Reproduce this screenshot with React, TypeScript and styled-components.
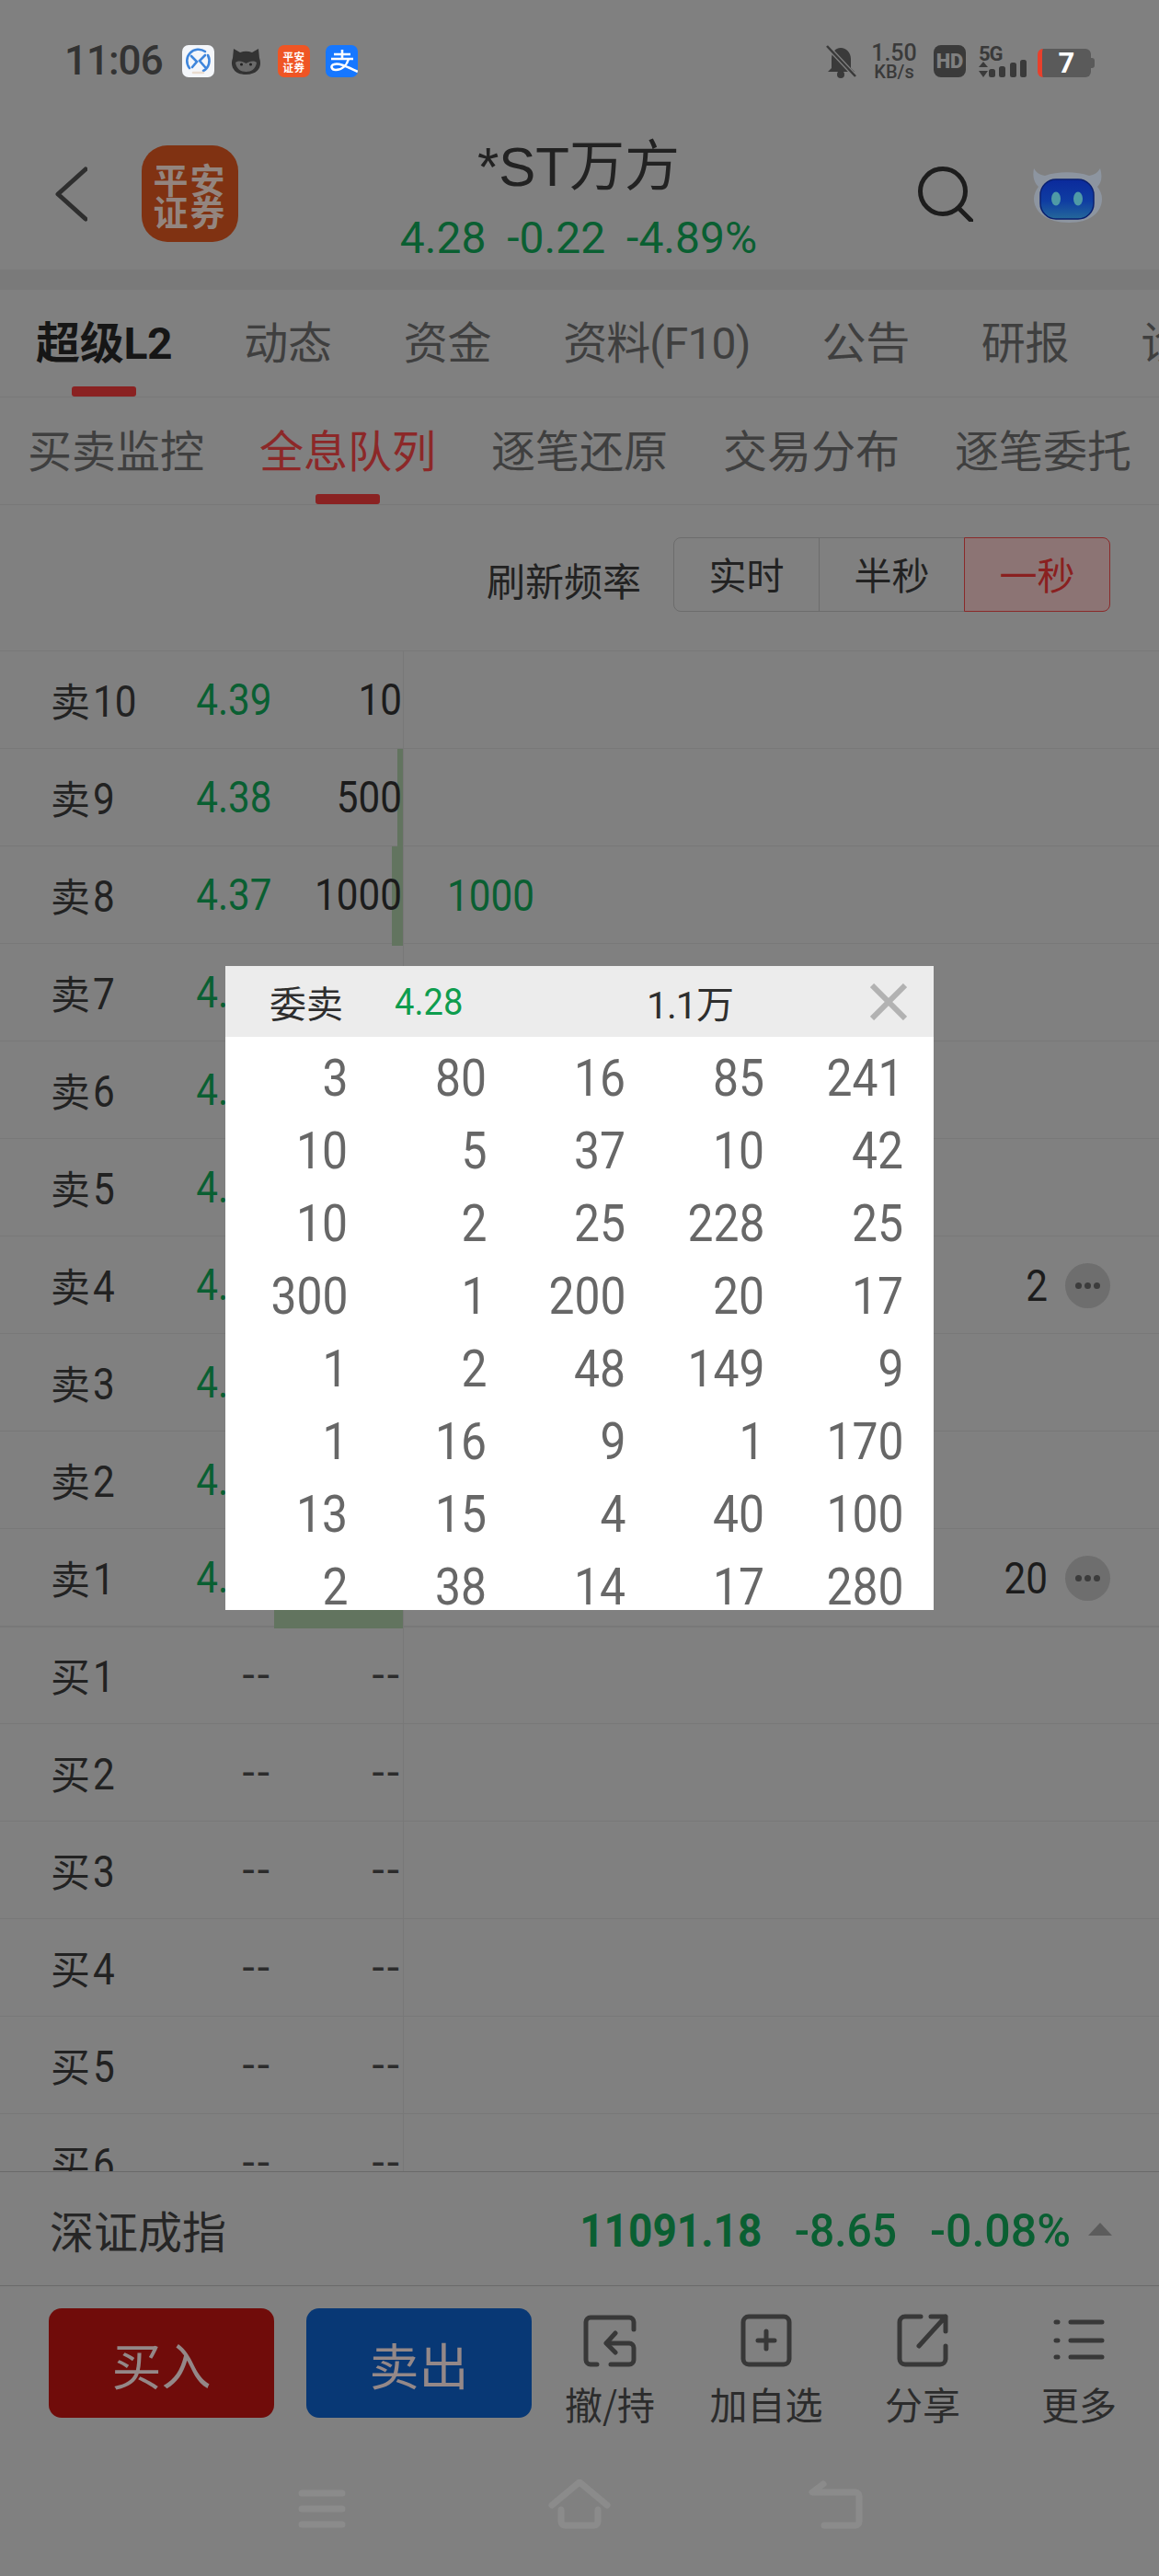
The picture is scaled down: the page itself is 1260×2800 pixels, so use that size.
import { createGlobalStyle, styled } from "styled-components";

const CN = `"Noto Sans CJK SC", sans-serif`;
const NUM = `Roboto, "Noto Sans CJK SC", sans-serif`;
const GREEN = "#0a5f32";
const LINE = "#787878";

const GlobalStyle = createGlobalStyle`
  html, body { margin: 0; padding: 0; background: #808080; }
  * { box-sizing: border-box; }
`;

const Screen = styled.div`
  position: relative;
  width: 1260px;
  height: 2800px;
  overflow: hidden;
  background: #808080;
  font-family: ${NUM};
  color: #1c1c1c;
`;

/* the app uses a condensed DIN-style face for figures, so Roboto gets squeezed */
const Narrow = styled.span<{ $sx?: number; $from?: string }>`
  display: inline-block;
  white-space: nowrap;
  transform: scaleX(${(p) => p.$sx ?? 0.88});
  transform-origin: ${(p) => p.$from ?? "right"} center;
`;

/* status bar */
const StatusBar = styled.div`
  height: 100px;
  padding: 49px 70px 0 70px;
  display: flex;
  justify-content: space-between;
  align-items: flex-start;
`;
const StatusGroup = styled.div`
  height: 35px;
  display: flex;
  align-items: center;
`;
const Clock = styled.span`
  width: 128px;
  font: 500 44px/35px Roboto, sans-serif;
  letter-spacing: -1px;
  color: #333;
`;
const AppIcons = styled.div`
  display: flex;
  gap: 17px;
`;
const AppIcon = styled.div<{ $bg: string }>`
  width: 35px;
  height: 35px;
  border-radius: 7px;
  background: ${(p) => p.$bg};
  display: flex;
  align-items: center;
  justify-content: center;
  overflow: hidden;
`;
const TinyLogoText = styled.span`
  font: 700 11.5px/12px ${CN};
  letter-spacing: 0.5px;
  color: #fff;
  text-align: center;
  width: 26px;
`;
const Speed = styled.div`
  width: 52px;
  margin: 0 17px 0 15px;
  display: flex;
  flex-direction: column;
  align-items: center;
  font-family: Roboto, sans-serif;
  font-weight: 500;
  color: #3a3a3a;
`;
const SpeedValue = styled.span`
  font-size: 25px;
  line-height: 22px;
`;
const SpeedUnit = styled.span`
  font-size: 20px;
  line-height: 18px;
`;
const HdBadge = styled.span`
  width: 35px;
  height: 35px;
  border-radius: 8px;
  background: #3a3a3a;
  color: #808080;
  font: 900 22px/35px Roboto, sans-serif;
  text-align: center;
  margin-right: 14px;
`;
const Network = styled.div`
  position: relative;
  width: 52px;
  height: 35px;
  margin-right: 12px;
`;
const NetworkLabel = styled.span`
  position: absolute;
  left: 0;
  top: 0;
  font: 700 22px/19px Roboto, sans-serif;
  letter-spacing: -1px;
  color: #3a3a3a;
`;
const Battery = styled.div`
  position: relative;
  width: 58px;
  height: 31px;
  margin-top: 4px;
  margin-right: 4px;
  border-radius: 6px;
  border-left: 5px solid #e8402c;
  background: #5a5a5a;
  color: #fff;
  font: 700 31px/31px Roboto, sans-serif;
  text-align: center;
  &::after {
    content: "";
    position: absolute;
    right: -4px;
    top: 10px;
    width: 4px;
    height: 11px;
    border-radius: 0 3px 3px 0;
    background: #5a5a5a;
  }
`;

/* stock header */
const Header = styled.header`
  height: 193px;
  padding: 28px 62px 0 60px;
  display: grid;
  grid-template-columns: 1fr auto 1fr;
  align-items: center;
`;
const HeaderLeft = styled.div`
  display: flex;
  align-items: center;
  gap: 59px;
`;
const BrokerLogo = styled.div`
  width: 105px;
  height: 105px;
  border-radius: 28px;
  background: #803212;
  color: #93857f;
  font: 700 38px/35px ${CN};
  letter-spacing: 2px;
  text-align: center;
  padding-top: 18px;
`;
const HeaderCenter = styled.div`
  display: flex;
  flex-direction: column;
  align-items: center;
  padding-top: 8px;
`;
const StockName = styled.div`
  font: 400 60px/72px "Liberation Sans", "Noto Sans CJK SC", sans-serif;
  color: #222;
`;
const StockQuote = styled.div`
  margin-top: 16px;
  font-size: 48px;
  line-height: 50px;
  word-spacing: 11px;
  color: ${GREEN};
  white-space: nowrap;
`;
const HeaderRight = styled.div`
  display: flex;
  justify-content: flex-end;
  align-items: center;
  gap: 64px;
`;

const Band = styled.div`
  height: 22px;
  background: #7a7a7a;
`;

/* tabs */
const TabRow = styled.nav<{ $left: number; $gap: number }>`
  height: 117px;
  padding-left: ${(p) => p.$left}px;
  display: flex;
  gap: ${(p) => p.$gap}px;
  align-items: center;
  border-bottom: 1px solid ${LINE};
  overflow: hidden;
  white-space: nowrap;
  flex-shrink: 0;
`;
const MainTab = styled.span<{ $active?: boolean; $tight?: boolean }>`
  position: relative;
  height: 116px;
  line-height: 118px;
  font-size: 48px;
  letter-spacing: ${(p) => (p.$tight ? -0.9 : -0.3)}px;
  font-weight: ${(p) => (p.$active ? 700 : 400)};
  color: ${(p) => (p.$active ? "#161616" : "#3f3f3f")};
  flex-shrink: 0;
  ${(p) =>
    p.$active &&
    `&::after {
      content: "";
      position: absolute;
      left: 50%;
      bottom: 0;
      width: 70px;
      height: 11px;
      margin-left: -35px;
      border-radius: 3px;
      background: #8a2222;
    }`}
`;
const SubTab = styled(MainTab)`
  font-weight: 400;
  letter-spacing: 0;
  line-height: 120px;
  color: ${(p) => (p.$active ? "#8c2828" : "#3f3f3f")};
`;

/* refresh rate */
const RefreshRow = styled.div`
  height: 159px;
  padding: 35px 53px 0 0;
  display: flex;
  justify-content: flex-end;
  gap: 36px;
  border-bottom: 1px solid ${LINE};
`;
const RefreshLabel = styled.span`
  font: 400 42px/92px ${CN};
  color: #222;
`;
const Segments = styled.div`
  display: flex;
  height: 81px;
`;
const Segment = styled.span<{ $active?: boolean }>`
  width: 159px;
  height: 81px;
  margin-left: -1px;
  border: 1px solid ${(p) => (p.$active ? "#8a2a2a" : "#6c6c6c")};
  background: ${(p) => (p.$active ? "#8c7474" : "transparent")};
  color: ${(p) => (p.$active ? "#8a2020" : "#222")};
  font: 400 41px/76px ${CN};
  text-align: center;
  &:first-child {
    border-radius: 8px 0 0 8px;
  }
  &:last-child {
    border-radius: 0 8px 8px 0;
  }
`;

/* order book */
const Book = styled.div`
  height: 1652px;
  overflow: hidden;
  flex-shrink: 0;
`;
const BookRow = styled.div<{ $thick?: boolean }>`
  height: 106px;
  display: grid;
  grid-template-columns: 158px 138px 142px 1fr;
  border-bottom: 1px solid ${LINE};
  font-size: 48px;
  line-height: 105px;
  ${(p) => p.$thick && `box-shadow: 0 1px 0 ${LINE};`}
`;
const BookLabel = styled.div`
  padding-left: 55px;
  display: flex;
  align-items: baseline;
  color: #222;
`;
const LabelWord = styled.span`
  font: 400 43px/105px ${CN};
  margin-right: 3px;
`;
const BookPrice = styled.div<{ $empty?: boolean }>`
  text-align: right;
  color: ${(p) => (p.$empty ? "#2c2c2c" : GREEN)};
  ${(p) => p.$empty && "letter-spacing: 3px;"}
`;
const BookQty = styled.div<{ $empty?: boolean }>`
  position: relative;
  padding-right: 1px;
  text-align: right;
  color: ${(p) => (p.$empty ? "#2c2c2c" : "inherit")};
  ${(p) => p.$empty && "letter-spacing: 3px;"}
`;
const QtyBar = styled.i`
  position: absolute;
  right: 0;
  top: 0;
  bottom: -1px;
  background: #62745f;
`;
const BookOrders = styled.div`
  border-left: 1px solid ${LINE};
  padding: 0 53px 0 47px;
  display: flex;
  justify-content: space-between;
  align-items: center;
`;
const OrderGreen = styled.span`
  color: ${GREEN};
`;
const OrderEnd = styled.div`
  margin-left: auto;
  display: flex;
  align-items: center;
  gap: 19px;
`;
const MoreButton = styled.span`
  width: 49px;
  height: 49px;
  border-radius: 50%;
  background: #6e6e6e;
  display: flex;
  align-items: center;
  justify-content: center;
  gap: 3px;
`;
const MoreDot = styled.i`
  width: 7px;
  height: 7px;
  border-radius: 50%;
  background: #3c3c3c;
`;

/* index ticker */
const IndexRow = styled.div`
  height: 125px;
  padding: 0 51px 0 54px;
  display: flex;
  align-items: center;
  border-top: 1px solid #6a6a6a;
  border-bottom: 1px solid #6a6a6a;
  flex-shrink: 0;
`;
const IndexName = styled.span`
  font: 400 48px/1 ${CN};
  color: #262626;
  margin-right: auto;
`;
const IndexValue = styled.span<{ $w: number; $bold?: boolean }>`
  width: ${(p) => p.$w}px;
  display: flex;
  justify-content: flex-end;
  padding-top: 4px;
  font-size: 50px;
  font-weight: ${(p) => (p.$bold ? 700 : 500)};
  color: ${GREEN};
  margin-right: 40px;
  white-space: nowrap;
  &:nth-of-type(4) {
    margin-right: 19px;
  }
`;
const IndexArrow = styled.i`
  width: 0;
  height: 0;
  border-left: 13px solid transparent;
  border-right: 13px solid transparent;
  border-bottom: 14px solid #5c5c5c;
`;

/* bottom actions */
const ActionBar = styled.div`
  height: 166px;
  padding: 24px 0 0 53px;
  display: flex;
`;
const TradeButton = styled.button<{ $bg: string }>`
  width: 245px;
  height: 119px;
  margin-right: 35px;
  border: 0;
  border-radius: 14px;
  background: ${(p) => p.$bg};
  color: #948888;
  font: 400 54px/119px ${CN};
  &:nth-of-type(2) {
    margin-right: 0;
  }
`;
const Action = styled.div`
  width: 170px;
  display: flex;
  flex-direction: column;
  align-items: center;
`;
const ActionIcon = styled.svg`
  width: 58px;
  height: 58px;
  margin-top: 6px;
  flex-shrink: 0;
  fill: none;
  stroke: #383838;
  stroke-width: 5;
  stroke-linecap: round;
  stroke-linejoin: round;
`;
const ActionLabel = styled.span`
  font: 400 41px/48px ${CN};
  color: #2c2c2c;
  margin-top: 15px;
  white-space: nowrap;
`;

/* system nav */
const NavBar = styled.div`
  height: 149px;
  padding-top: 44px;
  display: flex;
  justify-content: center;
  gap: 212px;
`;
const NavIcon = styled.svg`
  width: 68px;
  height: 56px;
  fill: none;
  stroke: #8b8b8b;
  stroke-width: 7;
  stroke-linecap: round;
  stroke-linejoin: round;
`;

/* queue popup */
const Popup = styled.div`
  position: absolute;
  left: 245px;
  top: 1050px;
  width: 770px;
  height: 700px;
  background: #fff;
  overflow: hidden;
`;
const PopupHeader = styled.div`
  height: 77px;
  padding: 0 29px 0 48px;
  background: #ececec;
  display: flex;
  align-items: center;
  font-size: 41px;
`;
const PopupTitle = styled.span`
  width: 136px;
  font: 400 40px/1 ${CN};
  color: #2e2e2e;
`;
const PopupPrice = styled.span`
  width: 274px;
  color: #0e9d4e;
`;
const PopupTotal = styled.span`
  letter-spacing: -1px;
  color: #2e2e2e;
`;
const PopupClose = styled.svg`
  width: 40px;
  height: 40px;
  margin-left: auto;
  stroke: #b2b2b2;
  stroke-width: 6;
`;
const PopupGrid = styled.div`
  padding: 6px 33px 0 0;
  display: grid;
  grid-template-columns: 133px repeat(4, 151px);
  grid-auto-rows: 79px;
  font-size: 56px;
  line-height: 79px;
  color: #676767;
  text-align: right;
`;

type Level = { label: string; price: string; qty: string; bar?: number; green?: string; count?: string };

const sells: Level[] = [
  { label: "卖10", price: "4.39", qty: "10" },
  { label: "卖9", price: "4.38", qty: "500", bar: 6 },
  { label: "卖8", price: "4.37", qty: "1000", bar: 12, green: "1000" },
  { label: "卖7", price: "4.36", qty: "" },
  { label: "卖6", price: "4.35", qty: "" },
  { label: "卖5", price: "4.34", qty: "" },
  { label: "卖4", price: "4.33", qty: "", count: "2" },
  { label: "卖3", price: "4.32", qty: "" },
  { label: "卖2", price: "4.31", qty: "" },
  { label: "卖1", price: "4.28", qty: "", bar: 140, count: "20" },
];
const buys: Level[] = ["买1", "买2", "买3", "买4", "买5", "买6"].map((label) => ({ label, price: "--", qty: "--" }));

const queue = [
  3, 80, 16, 85, 241, 10, 5, 37, 10, 42, 10, 2, 25, 228, 25, 300, 1, 200, 20, 17, 1, 2, 48, 149, 9, 1, 16, 9, 1, 170,
  13, 15, 4, 40, 100, 2, 38, 14, 17, 280,
];

const mainTabs = ["超级L2", "动态", "资金", "资料(F10)", "公告", "研报", "诊股"];
const subTabs = ["买卖监控", "全息队列", "逐笔还原", "交易分布", "逐笔委托"];

function LevelRow({ level, thick }: { level: Level; thick?: boolean }) {
  const empty = level.price === "--";
  return (
    <BookRow $thick={thick}>
      <BookLabel>
        <LabelWord>{level.label.slice(0, 1)}</LabelWord>
        <Narrow $from="left">{level.label.slice(1)}</Narrow>
      </BookLabel>
      <BookPrice $empty={empty}>{empty ? level.price : <Narrow>{level.price}</Narrow>}</BookPrice>
      <BookQty $empty={empty}>
        {level.bar ? <QtyBar style={{ width: level.bar }} /> : null}
        {empty ? level.qty : <Narrow>{level.qty}</Narrow>}
      </BookQty>
      <BookOrders>
        {level.green && (
          <OrderGreen>
            <Narrow $from="left">{level.green}</Narrow>
          </OrderGreen>
        )}
        {level.count && (
          <OrderEnd>
            <Narrow>{level.count}</Narrow>
            <MoreButton>
              <MoreDot />
              <MoreDot />
              <MoreDot />
            </MoreButton>
          </OrderEnd>
        )}
      </BookOrders>
    </BookRow>
  );
}

export default function App() {
  return (
    <Screen>
      <GlobalStyle />
      <StatusBar>
        <StatusGroup>
          <Clock>11:06</Clock>
          <AppIcons>
            <AppIcon $bg="#f4f6fa">
              <svg width="35" height="35" viewBox="0 0 35 35" fill="none" stroke="#3f86dc" strokeWidth="2.600" strokeLinecap="round">
                <path d="M8 25A12.500 12.500 0 0 1 25 7" />
                <path d="M10 12l6 6-5 6" />
                <path d="M25 11l-6 6 6 7" />
                <path d="M28 11a12.500 12.500 0 0 1-5 17" />
                <path d="M12 30h11" stroke="#e9dccf" />
              </svg>
            </AppIcon>
            <AppIcon $bg="transparent">
              <svg width="35" height="35" viewBox="0 0 35 35">
                <path d="M4 4l7 4a15 12 0 0 1 13 0l7-4 1 10c3 8 0 18-14.500 18S0 22 3 14z" fill="#333" />
                <path d="M6 19c4-3 8-1 11.500 1 3.500-2 8-4 11.500-1-1 7-6 10-11.500 10S7 26 6 19z" fill="#6a6a6a" />
                <circle cx="12.500" cy="21" r="1.500" fill="#222" />
                <circle cx="22.500" cy="21" r="1.500" fill="#222" />
              </svg>
            </AppIcon>
            <AppIcon $bg="#ef5524">
              <TinyLogoText>平安证券</TinyLogoText>
            </AppIcon>
            <AppIcon $bg="#1677ff">
              <svg width="35" height="35" viewBox="0 0 35 35" fill="none" stroke="#fff" strokeWidth="2.600">
                <path d="M9 10h18M18 5v10M6 15h24" />
                <path d="M25 15c-2 7-7 12-14 12-5 0-6-5-2-6 6-2 15 3 26 8" />
              </svg>
            </AppIcon>
          </AppIcons>
        </StatusGroup>
        <StatusGroup>
          <svg width="33" height="36" viewBox="0 0 33 36">
            <path d="M6 25V15C6 8 10 3 16 3s11 5 11 12v10l4 4H2z" fill="#3a3a3a" />
            <circle cx="16" cy="32" r="4" fill="#3a3a3a" />
            <path d="M1 1l31 33" stroke="#808080" strokeWidth="5" />
            <path d="M1 1l31 33" stroke="#3a3a3a" strokeWidth="2.500" />
          </svg>
          <Speed>
            <SpeedValue>1.50</SpeedValue>
            <SpeedUnit>KB/s</SpeedUnit>
          </Speed>
          <HdBadge>HD</HdBadge>
          <Network>
            <NetworkLabel>5G</NetworkLabel>
            <svg width="52" height="35" viewBox="0 0 52 35" fill="#3a3a3a">
              <path d="M5 18l5 6H0zM5 35l5-7H0z" />
              <rect x="11" y="26" width="7" height="9" rx="2.500" />
              <rect x="22" y="23" width="7" height="12" rx="2.500" />
              <rect x="34" y="19" width="7" height="16" rx="2.500" />
              <rect x="45" y="16" width="7" height="19" rx="2.500" />
            </svg>
          </Network>
          <Battery>7</Battery>
        </StatusGroup>
      </StatusBar>

      <Header>
        <HeaderLeft>
          <svg width="35" height="60" viewBox="0 0 35 60" fill="none" stroke="#2e2e2e" strokeWidth="5" strokeLinecap="round" strokeLinejoin="round">
            <path d="M33 3L3 30l30 27" />
          </svg>
          <BrokerLogo>
            平安
            <br />
            证券
          </BrokerLogo>
        </HeaderLeft>
        <HeaderCenter>
          <StockName>*ST万方</StockName>
          <StockQuote>4.28 -0.22 -4.89%</StockQuote>
        </HeaderCenter>
        <HeaderRight>
          <svg width="60" height="60" viewBox="0 0 60 60" fill="none" stroke="#1d1d1d" strokeWidth="5" strokeLinecap="round">
            <circle cx="27" cy="27" r="24.500" />
            <path d="M44 45l14 14" />
          </svg>
          <svg width="76" height="62" viewBox="0 0 76 62">
            <defs>
              <linearGradient id="bot" x1="0" y1="0" x2="0" y2="1">
                <stop offset="0" stopColor="#0b2a9c" />
                <stop offset="0.55" stopColor="#0f3da2" />
                <stop offset="1" stopColor="#24689a" />
              </linearGradient>
            </defs>
            <path d="M2 3c3 5 6 7 12 8 14-5 34-5 48 0 6-1 9-3 12-8 3 10 1 16-3 20 3 4 5 8 5 13 0 14-12 26-36 26S2 50 2 36c0-5 2-9 5-13C3 19 0 13 2 3z" fill="#8d95a0" />
            <rect x="9" y="15" width="58" height="43" rx="17" fill="url(#bot)" stroke="#0a2070" strokeWidth="1.500" />
            <ellipse cx="26" cy="36" rx="5" ry="7.500" fill="#4f9aa6" />
            <ellipse cx="50" cy="36" rx="5" ry="7.500" fill="#4f9aa6" />
          </svg>
        </HeaderRight>
      </Header>

      <Band />

      <TabRow $left={39} $gap={78}>
        {mainTabs.map((tab, i) => (
          <MainTab key={tab} $active={i === 0} $tight={tab.includes("F10")}>
            {tab}
          </MainTab>
        ))}
      </TabRow>
      <TabRow $left={30} $gap={60}>
        {subTabs.map((tab, i) => (
          <SubTab key={tab} $active={i === 1}>
            {tab}
          </SubTab>
        ))}
      </TabRow>

      <RefreshRow>
        <RefreshLabel>刷新频率</RefreshLabel>
        <Segments>
          <Segment>实时</Segment>
          <Segment>半秒</Segment>
          <Segment $active>一秒</Segment>
        </Segments>
      </RefreshRow>

      <Book>
        {sells.map((level) => (
          <LevelRow key={level.label} level={level} thick={level.label === "卖1"} />
        ))}
        {buys.map((level) => (
          <LevelRow key={level.label} level={level} />
        ))}
      </Book>

      <IndexRow>
        <IndexName>深证成指</IndexName>
        <IndexValue $w={197} $bold>
          <Narrow $sx={0.92}>11091.18</Narrow>
        </IndexValue>
        <IndexValue $w={107}>
          <Narrow $sx={0.96}>-8.65</Narrow>
        </IndexValue>
        <IndexValue $w={149}>-0.08%</IndexValue>
        <IndexArrow />
      </IndexRow>

      <ActionBar>
        <TradeButton $bg="#700c0a">买入</TradeButton>
        <TradeButton $bg="#083875">卖出</TradeButton>
        <Action>
          <ActionIcon viewBox="0 0 58 58">
            <path d="M55 17V9a5 5 0 0 0-5-5H8a5 5 0 0 0-5 5v41a5 5 0 0 0 5 5h7" />
            <path d="M30 55h20a5 5 0 0 0 5-5V37a5 5 0 0 0-5-5H26" />
            <path d="M35 21L25 32l10 10" />
          </ActionIcon>
          <ActionLabel>撤/持</ActionLabel>
        </Action>
        <Action>
          <ActionIcon viewBox="0 0 58 58">
            <rect x="4" y="3" width="50" height="52" rx="6" />
            <path d="M29 19v19M20 29h18" />
          </ActionIcon>
          <ActionLabel>加自选</ActionLabel>
        </Action>
        <Action>
          <ActionIcon viewBox="0 0 58 58">
            <path d="M27 3H10a6 6 0 0 0-6 6v40a6 6 0 0 0 6 6h38a6 6 0 0 0 6-6V35" />
            <path d="M25 35L54 3M38 3h16v16" />
          </ActionIcon>
          <ActionLabel>分享</ActionLabel>
        </Action>
        <Action>
          <ActionIcon viewBox="0 0 58 58">
            <path d="M4 9h2M4 29h2M4 47h2" />
            <path d="M20 9h34M20 29h34M20 47h34" />
          </ActionIcon>
          <ActionLabel>更多</ActionLabel>
        </Action>
      </ActionBar>

      <NavBar>
        <NavIcon viewBox="0 0 68 56">
          <path d="M12 15h44M12 32h44M12 49h44" />
        </NavIcon>
        <NavIcon viewBox="0 0 68 56">
          <path d="M4 28L34 3l30 25" />
          <path d="M14 33v13a4 4 0 0 0 4 4h32a4 4 0 0 0 4-4V33" />
        </NavIcon>
        <NavIcon viewBox="0 0 68 56">
          <path d="M19 5L7 14h47a4 4 0 0 1 4 4v28a4 4 0 0 1-4 4H20" />
        </NavIcon>
      </NavBar>

      <Popup>
        <PopupHeader>
          <PopupTitle>委卖</PopupTitle>
          <PopupPrice>
            <Narrow $sx={0.93} $from="left">
              4.28
            </Narrow>
          </PopupPrice>
          <PopupTotal>1.1万</PopupTotal>
          <PopupClose viewBox="0 0 40 40">
            <path d="M2 2l36 36M38 2L2 38" />
          </PopupClose>
        </PopupHeader>
        <PopupGrid>
          {queue.map((n, i) => (
            <span key={i}>
              <Narrow $sx={0.89}>{n}</Narrow>
            </span>
          ))}
        </PopupGrid>
      </Popup>
    </Screen>
  );
}
